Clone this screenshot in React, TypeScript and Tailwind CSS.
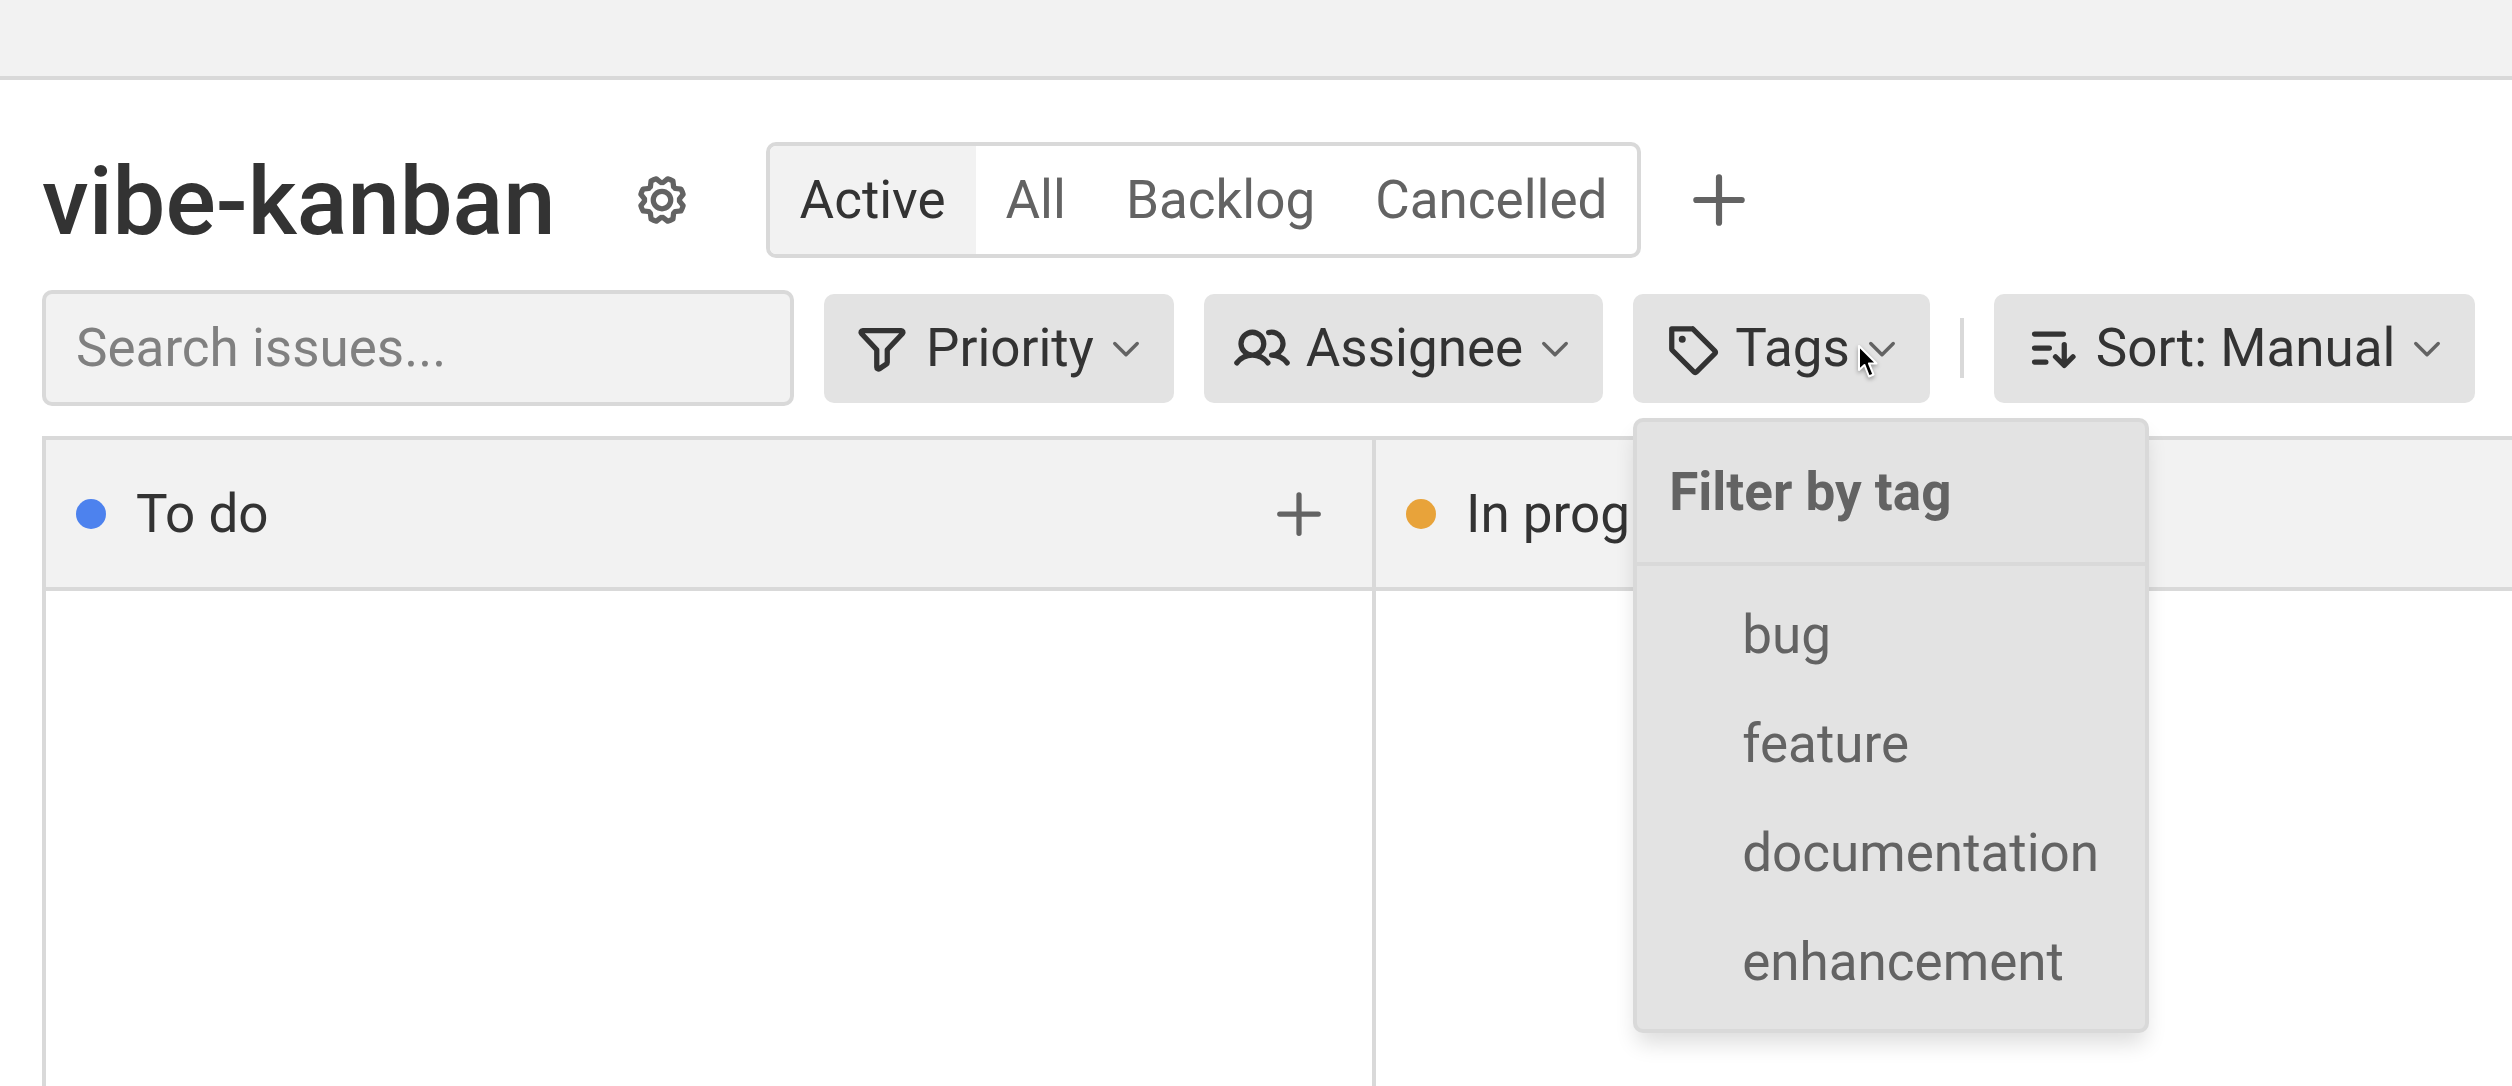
import type { ReactNode } from "react";
import {
  PiCaretDownBold,
  PiFunnelBold,
  PiGearBold,
  PiPlusBold,
  PiSortAscendingBold,
  PiTagBold,
  PiUsersBold,
} from "react-icons/pi";

const views = ["Active", "All", "Backlog", "Cancelled"];
const tags = ["bug", "feature", "documentation", "enhancement"];
const columns = [
  { name: "To do", dot: "bg-[#4d82ee]" },
  { name: "In progress", dot: "bg-[#e8a33a]" },
];

function FilterButton({ icon, label, expanded }: { icon: ReactNode; label: string; expanded?: boolean }) {
  return (
    <button
      type="button"
      aria-haspopup="menu"
      aria-expanded={expanded ?? false}
      className="flex h-[109px] shrink-0 items-center rounded-[10px] bg-[#e3e3e3] px-[30px] whitespace-nowrap text-[#333333]"
    >
      {icon}
      <span className="mr-[14px] ml-4">{label}</span>
      <PiCaretDownBold className="size-9 text-[#636363]" />
    </button>
  );
}

function TagMenu() {
  return (
    <div
      role="menu"
      aria-label="Filter by tag"
      className="absolute top-[124px] left-0 z-10 w-[516px] rounded-[10px] border-4 border-[#d9d9d9] bg-[#e3e3e3] text-[#636363] shadow-[0_14px_22px_-4px_rgba(0,0,0,0.14)]"
    >
      <div className="border-b-4 border-[#d9d9d9] px-8 py-8 font-bold">Filter by tag</div>
      <div className="flex flex-col pt-[15px] pb-3">
        {tags.map((tag) => (
          <button key={tag} type="button" role="menuitem" className="h-[109px] pl-[105px] text-left">
            {tag}
          </button>
        ))}
      </div>
    </div>
  );
}

function Cursor() {
  return (
    <svg
      viewBox="0 0 24 36"
      className="absolute top-[50px] left-[224px] z-20 h-9 w-6 drop-shadow-[0_2px_2px_rgba(0,0,0,0.35)]"
      aria-hidden="true"
    >
      <path
        d="M2 2v24l5.5-5 4.5 11.5 4.5-2L12 19.5h7.5z"
        fill="#000"
        stroke="#fff"
        strokeWidth="2"
        strokeLinejoin="round"
      />
    </svg>
  );
}

export default function App() {
  return (
    <div className="flex min-h-screen flex-col overflow-hidden bg-white font-['Roboto',sans-serif] text-[53px] leading-[76px] text-[#333333]">
      <header className="h-20 border-b-4 border-[#d9d9d9] bg-[#f2f2f2]" />
      <main className="flex flex-1 flex-col pt-[62px] pl-[42px]">
        <div className="flex items-center">
          <h1 className="pt-1 text-[94px] font-medium">vibe-kanban</h1>
          <button type="button" aria-label="Project settings" className="ml-[78px] text-[#636363]">
            <PiGearBold className="size-14" />
          </button>
          <div className="ml-[76px] flex h-[116px] overflow-hidden rounded-[10px] border-4 border-[#d9d9d9]">
            {views.map((view, i) => (
              <button
                key={view}
                type="button"
                aria-pressed={i === 0}
                className={i === 0 ? "bg-[#f2f2f2] px-[30px]" : "px-[30px] text-[#636363]"}
              >
                {view}
              </button>
            ))}
          </div>
          <button type="button" aria-label="Add view" className="ml-[45px] text-[#636363]">
            <PiPlusBold className="size-[66px]" />
          </button>
        </div>

        <div className="mt-8 flex items-center gap-[30px]">
          <input
            type="text"
            aria-label="Search issues"
            placeholder="Search issues..."
            className="h-[116px] w-[752px] shrink-0 rounded-[10px] border-4 border-[#d9d9d9] bg-[#f2f2f2] px-[30px] placeholder:text-[#808080]"
          />
          <FilterButton icon={<PiFunnelBold className="size-14" />} label="Priority" />
          <FilterButton icon={<PiUsersBold className="size-14" />} label="Assignee" />
          <div className="relative">
            <FilterButton icon={<PiTagBold className="size-14" />} label="Tags" expanded />
            <TagMenu />
            <Cursor />
          </div>
          <div className="h-[60px] w-1 shrink-0 bg-[#d9d9d9]" />
          <FilterButton icon={<PiSortAscendingBold className="size-14" />} label="Sort: Manual" />
        </div>

        <div className="mt-[30px] flex flex-1">
          {columns.map((column) => (
            <section key={column.name} className="flex w-[1330px] shrink-0 flex-col border-t-4 border-l-4 border-[#d9d9d9]">
              <div className="flex h-[151px] items-center border-b-4 border-[#d9d9d9] bg-[#f2f2f2] pr-[45px] pl-[30px]">
                <span className={`size-[30px] rounded-full ${column.dot}`} />
                <h2 className="ml-[30px] flex-1">{column.name}</h2>
                <button type="button" aria-label={`Add issue to ${column.name}`} className="text-[#636363]">
                  <PiPlusBold className="size-14" />
                </button>
              </div>
            </section>
          ))}
        </div>
      </main>
    </div>
  );
}
